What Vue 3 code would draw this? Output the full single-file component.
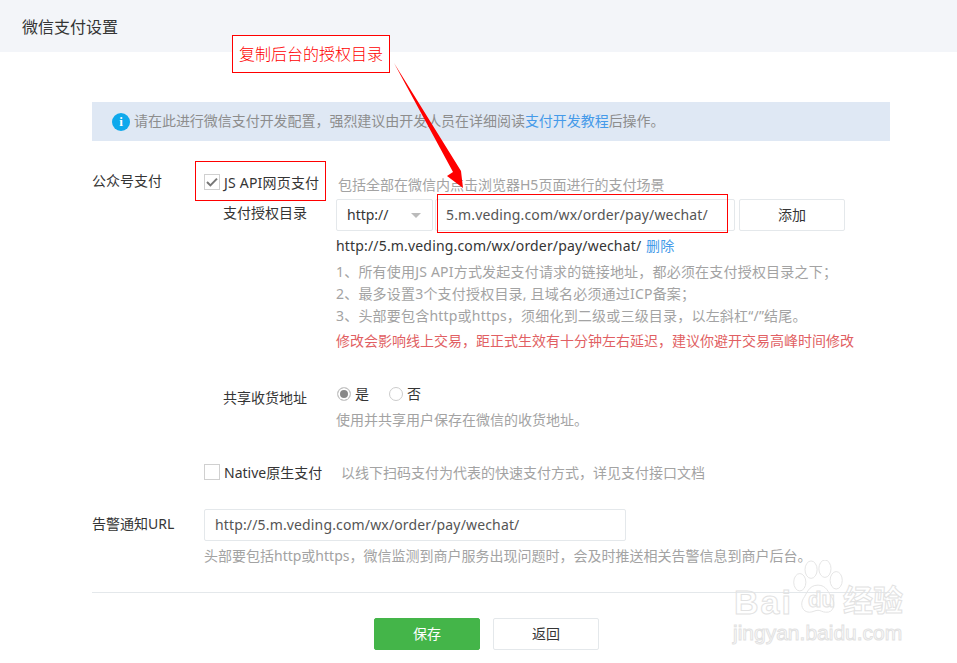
<script setup>
const notes = [
  '1、所有使用JS API方式发起支付请求的链接地址，都必须在支付授权目录之下；',
  '2、最多设置3个支付授权目录, 且域名必须通过ICP备案；',
  '3、头部要包含http或https，须细化到二级或三级目录，以左斜杠“/”结尾。'
]
</script>

<template>
  <div class="page">
    <header class="head">微信支付设置</header>
    <main class="body">
      <div class="notice">
        <span class="info">i</span>
        <span class="notice-text">请在此进行微信支付开发配置，强烈建议由开发人员在详细阅读<a class="link">支付开发教程</a>后操作。</span>
      </div>

      <section class="pay">
        <div class="label">公众号支付</div>
        <div class="pay-main">
          <div class="check-row">
            <span class="box"><svg width="12" height="10" viewBox="0 0 12 10"><path d="M1 5l3.4 3.4L11 1.6" fill="none" stroke="#777" stroke-width="2"/></svg></span>
            <span class="check-text api">JS API网页支付</span>
            <span class="hint first">包括全部在微信内点击浏览器H5页面进行的支付场景</span>
          </div>
          <div class="sub auth">
            <div class="sub-label">支付授权目录</div>
            <div class="sub-main">
              <div class="controls">
                <div class="select">http://<i class="caret"></i></div>
                <div class="input wide">5.m.veding.com/wx/order/pay/wechat/</div>
                <div class="btn add">添加</div>
              </div>
              <div class="url">http://5.m.veding.com/wx/order/pay/wechat/ <a class="link del">删除</a></div>
              <div class="notes">
                <p v-for="n in notes" :key="n">{{ n }}</p>
              </div>
              <p class="warn">修改会影响线上交易，距正式生效有十分钟左右延迟，建议你避开交易高峰时间修改</p>
            </div>
          </div>
          <div class="sub share">
            <div class="sub-label">共享收货地址</div>
            <div class="sub-main">
              <div class="radios">
                <span class="radio on"></span><span class="r-text">是</span>
                <span class="radio"></span><span class="r-text">否</span>
              </div>
              <div class="hint share-hint">使用并共享用户保存在微信的收货地址。</div>
            </div>
          </div>
          <div class="check-row native">
            <span class="box"></span>
            <span class="check-text">Native原生支付</span>
            <span class="hint second">以线下扫码支付为代表的快速支付方式，详见支付接口文档</span>
          </div>
        </div>
      </section>

      <section class="alarm">
        <div class="label alarm-label">告警通知URL</div>
        <div>
          <div class="input alarm-input">http://5.m.veding.com/wx/order/pay/wechat/</div>
          <div class="hint alarm-hint">头部要包括http或https，微信监测到商户服务出现问题时，会及时推送相关告警信息到商户后台。</div>
        </div>
      </section>

      <div class="actions">
        <div class="btn primary">保存</div>
        <div class="btn back">返回</div>
      </div>
    </main>

    <div class="callout">复制后台的授权目录</div>
    <div class="mark mark-check"></div>
    <div class="mark mark-input"></div>
    <svg class="arrow" width="957" height="663" viewBox="0 0 957 663">
      <polygon points="394,63 461,171 463,188 447,176 453,172" fill="#f00"/>
    </svg>
    <div class="wm">
      <svg class="paw" width="52" height="58" viewBox="0 0 60 60" preserveAspectRatio="none">
        <g fill="none" stroke="#e2e2e2" stroke-width="1">
          <ellipse cx="9" cy="23" rx="7" ry="9"/>
          <ellipse cx="22" cy="10" rx="7" ry="9"/>
          <ellipse cx="38" cy="9" rx="7" ry="9"/>
          <ellipse cx="51" cy="21" rx="7" ry="9"/>
          <path d="M30 26c10 0 12 8 16 13 5 6 2 16-7 15-4 0-6-2-9-2s-6 2-10 2c-8 0-11-8-7-14 4-5 6-14 17-14z"/>
        </g>
      </svg>
      <span class="wm-bai">Bai</span><span class="wm-du">du</span><span class="wm-jy">经验</span>
      <span class="wm-url">jingyan.baidu.com</span>
    </div>
  </div>
</template>

<style>
html, body { margin: 0; background: #fff; overflow: hidden; }
</style>

<style scoped>
.page {
  position: relative;
  width: 957px;
  height: 663px;
  overflow: hidden;
  background: #fff;
  color: #353535;
  font: 14px/20px "Noto Sans", "Noto Sans CJK SC", sans-serif;
}
.head {
  height: 52px;
  padding-left: 22px;
  background: #f3f5f9;
  font-size: 16px;
  line-height: 54px;
}
.body { padding: 50px 67px 0 92px; }
.notice {
  display: flex;
  align-items: center;
  gap: 5px;
  height: 39px;
  padding-left: 20px;
  background: #dfe8f4;
  color: #8d8d8d;
  font-size: 14px;
}
.notice-text { margin: -2px 0 0 -1px; letter-spacing: -0.04px; }
.info {
  width: 18px;
  height: 18px;
  border-radius: 50%;
  background: #0fa9ec;
  color: #fff;
  font: bold 13px/18px "Liberation Serif", serif;
  text-align: center;
}
.link { color: #459ae9; }
.pay { display: flex; margin-top: 30px; }
.label { width: 112px; flex: none; }
.pay-main { flex: 1; }
.check-row { display: flex; align-items: center; height: 24px; }
.box {
  display: flex;
  align-items: center;
  justify-content: center;
  box-sizing: border-box;
  width: 16px;
  height: 16px;
  margin-top: -2px;
  border: 1px solid #d0d0d0;
  background: #fff;
}
.check-text { margin: -1px 0 0 4px; width: 114px; white-space: nowrap; }
.api { letter-spacing: 0.2px; }
.hint { color: #a3a3a3; }
.first { margin-top: 4px; }
.sub { display: flex; }
.sub-label { width: 132px; flex: none; padding-left: 19px; box-sizing: border-box; }
.sub-main { flex: 1; }
.auth { margin-top: 4px; }
.auth .sub-label { padding-top: 4px; }
.controls { display: flex; height: 32px; }
.select, .input, .btn {
  box-sizing: border-box;
  height: 32px;
  border: 1px solid #e4e8eb;
  border-radius: 2px;
  line-height: 30px;
  background: #fff;
}
.select { position: relative; width: 97px; padding-left: 10px; }
.caret {
  position: absolute;
  right: 11px;
  top: 13px;
  border: 5px solid transparent;
  border-top: 5px solid #bbb;
  border-bottom: 0;
}
.input { color: #555; padding-left: 10px; letter-spacing: 0.15px; }
.wide { width: 300px; margin-left: 2px; }
.btn { text-align: center; }
.add { width: 106px; margin-left: 4px; }
.url { margin-top: 5px; letter-spacing: 0.17px; }
.del { margin-left: 1px; }
.notes { margin-top: 5px; color: #a3a3a3; letter-spacing: 0.2px; }
.notes p { margin: 0; line-height: 22px; }
.warn { margin: 3px 0 0; color: #e15f63; font-size: 14px; line-height: 22px; white-space: nowrap; }
.share { margin-top: 36px; }
.radios { display: flex; align-items: center; height: 20px; margin-top: -4px; }
.radio {
  box-sizing: border-box;
  width: 14px;
  height: 14px;
  border: 1px solid #ccc;
  border-radius: 50%;
  margin: 0 4px 0 1px;
}
.radio.on { background: #888; box-shadow: inset 0 0 0 2px #fff; }
.r-text { margin-right: 19px; }
.share-hint { margin-top: 6px; }
.native { margin-top: 31px; }
.native .check-text { width: 113px; }
.second { margin-left: 4px; }
.alarm { display: flex; margin-top: 24px; }
.alarm-label { padding-top: 5px; }
.alarm-input { width: 422px; }
.alarm-hint { margin-top: 5px; }
.actions {
  display: flex;
  justify-content: center;
  gap: 13px;
  margin-top: 26px;
  padding: 25px 9px 0 0;
  border-top: 1px solid #e4e8eb;
}
.btn.primary { width: 106px; background: #44b549; border-color: #44b549; color: #fff; }
.btn.back { width: 106px; }
.callout {
  position: absolute;
  left: 232px;
  top: 35px;
  box-sizing: border-box;
  width: 158px;
  height: 38px;
  border: 1px solid #f00;
  background: #fff;
  color: #f00;
  font-size: 16px;
  font-weight: 300;
  line-height: 36px;
  text-align: center;
}
.mark { position: absolute; box-sizing: border-box; border: 1px solid #f00; }
.mark-check { left: 195px; top: 161px; width: 131px; height: 40px; }
.mark-input { left: 437px; top: 194px; width: 291px; height: 39px; }
.arrow { position: absolute; left: 0; top: 0; pointer-events: none; }
.wm { position: absolute; left: 732px; top: 560px; width: 180px; height: 90px; pointer-events: none; }
.paw { position: absolute; left: 60px; top: 0; }
.wm-bai, .wm-du, .wm-jy, .wm-url {
  position: absolute;
  color: transparent;
  -webkit-text-stroke: 1px #e2e2e2;
  white-space: nowrap;
  font-family: "Liberation Sans", sans-serif;
}
.wm-bai { left: 2px; top: 22px; font-size: 34px; line-height: 40px; font-weight: 700; letter-spacing: 2px; }
.wm-du { left: 76px; top: 28px; font-size: 22px; line-height: 24px; font-weight: 700; }
.wm-jy { left: 111px; top: 20px; font: 700 30px/36px "Noto Sans CJK SC", sans-serif; }
.wm-url { left: 1px; top: 61px; font-size: 21px; line-height: 24px; }
</style>
